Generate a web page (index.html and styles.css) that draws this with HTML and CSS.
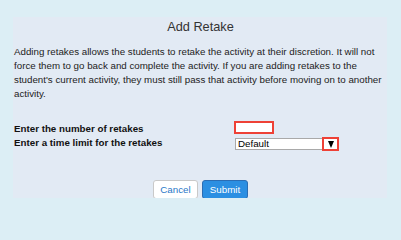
FILE: index.html
```html
<!DOCTYPE html>
<html>
<head>
<meta charset="utf-8">
<link rel="stylesheet" href="styles.css">
</head>
<body>
<div class="panel">
  <div class="title">Add Retake</div>
  <p class="intro">Adding retakes allows the students to retake the activity at their discretion. It will not force them to go back and complete the activity. If you are adding retakes to the student's current activity, they must still pass that activity before moving on to another activity.</p>
  <div class="form">
    <div class="label">Enter the number of retakes</div>
    <div class="ctrl"><div class="num"></div></div>
    <div class="label">Enter a time limit for the retakes</div>
    <div class="ctrl">
      <div class="select"><span class="val">Default</span><span class="arrow"><span class="tri"></span></span></div>
    </div>
  </div>
  <div class="buttons">
    <button class="btn cancel">Cancel</button>
    <button class="btn submit">Submit</button>
  </div>
</div>
</body>
</html>
```
FILE: styles.css
```css
html, body {
  margin: 0;
  padding: 0;
  background: #dceef5;
  font-family: "Liberation Sans", Arial, sans-serif;
}
.panel {
  margin: 17px 14px 0 13px;
  padding-left: 1px;
  height: 181px;
  background: #e2eaf4;
  box-sizing: border-box;
}
.title {
  text-align: center;
  font-size: 12.75px;
  line-height: 20px;
  color: #333;
}
.intro {
  margin: 8px 0 0 0;
  font-size: 9.75px;
  line-height: 14px;
  color: #222;
}
.form {
  margin-top: 21px;
  display: grid;
  grid-template-columns: 220px auto;
  grid-auto-rows: 14px;
  align-items: start;
}
.label {
  font-size: 9.75px;
  line-height: 14px;
  font-weight: bold;
  color: #111;
}
.num {
  margin-top: -1px;
  width: 40px;
  height: 13px;
  box-sizing: border-box;
  border: 2px solid #ee4136;
  background: #fff;
}
.select {
  margin-top: 2px;
  margin-left: 1px;
  width: 103px;
  height: 12px;
  box-sizing: border-box;
  border: 1px solid #a9a9a9;
  border-right-color: #c8c8c8;
  background: #fff;
  display: flex;
  align-items: center;
}
.val {
  flex: 1;
  font-size: 9.75px;
  line-height: 10px;
  padding-left: 2px;
  color: #000;
}
.arrow {
  margin: -3px -2px -3px 0;
  width: 17px;
  height: 14px;
  box-sizing: border-box;
  border: 2px solid #ee4136;
  background: #fff;
  display: flex;
  align-items: center;
  justify-content: center;
}
.tri {
  width: 0;
  height: 0;
  border-left: 3.5px solid transparent;
  border-right: 3.5px solid transparent;
  border-top: 7px solid #000;
}
.buttons {
  margin-top: 30px;
  display: flex;
  justify-content: center;
  gap: 4px;
}
.btn {
  height: 19px;
  padding: 0;
  font-family: "Liberation Sans", Arial, sans-serif;
  font-size: 9.75px;
  border-radius: 3px;
  box-sizing: border-box;
}
.cancel {
  width: 45px;
  background: #fff;
  color: #2a78c8;
  border: 1px solid #c9c9c9;
}
.submit {
  width: 46px;
  background: #2b8fe2;
  color: #fff;
  border: 1px solid #2b6db3;
}
```
